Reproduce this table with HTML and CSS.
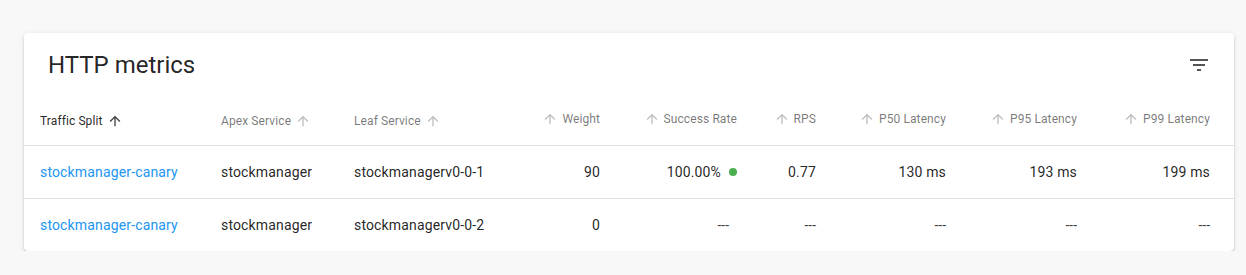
FILE: index.html
```html
<!DOCTYPE html>
<html>
<head>
<meta charset="utf-8">
<link rel="stylesheet" href="styles.css">
</head>
<body>
<div class="page">
  <div class="card">
    <div class="toolbar">
      <h2 class="title">HTTP metrics</h2>
      <span class="filter" aria-label="Filter list">
        <svg viewBox="0 0 24 24" width="24" height="24"><path d="M10 18h4v-2h-4v2zM3 6v2h18V6H3zm3 7h12v-2H6v2z"/></svg>
      </span>
    </div>
    <table class="metrics">
      <colgroup>
        <col class="c1"><col class="c2"><col class="c3"><col class="c4"><col class="c5"><col class="c6"><col class="c7"><col class="c8"><col class="c9">
      </colgroup>
      <thead>
        <tr>
          <th><span class="sort active">Traffic Split<svg class="arrow" viewBox="0 0 24 24"><path d="M4 12l1.41 1.41L11 7.83V20h2V7.83l5.58 5.59L20 12l-8-8-8 8z"/></svg></span></th>
          <th><span class="sort">Apex Service<svg class="arrow" viewBox="0 0 24 24"><path d="M4 12l1.41 1.41L11 7.83V20h2V7.83l5.58 5.59L20 12l-8-8-8 8z"/></svg></span></th>
          <th><span class="sort">Leaf Service<svg class="arrow" viewBox="0 0 24 24"><path d="M4 12l1.41 1.41L11 7.83V20h2V7.83l5.58 5.59L20 12l-8-8-8 8z"/></svg></span></th>
          <th class="num"><span class="sort rev">Weight<svg class="arrow" viewBox="0 0 24 24"><path d="M4 12l1.41 1.41L11 7.83V20h2V7.83l5.58 5.59L20 12l-8-8-8 8z"/></svg></span></th>
          <th class="num"><span class="sort rev">Success Rate<svg class="arrow" viewBox="0 0 24 24"><path d="M4 12l1.41 1.41L11 7.83V20h2V7.83l5.58 5.59L20 12l-8-8-8 8z"/></svg></span></th>
          <th class="num"><span class="sort rev">RPS<svg class="arrow" viewBox="0 0 24 24"><path d="M4 12l1.41 1.41L11 7.83V20h2V7.83l5.58 5.59L20 12l-8-8-8 8z"/></svg></span></th>
          <th class="num"><span class="sort rev">P50 Latency<svg class="arrow" viewBox="0 0 24 24"><path d="M4 12l1.41 1.41L11 7.83V20h2V7.83l5.58 5.59L20 12l-8-8-8 8z"/></svg></span></th>
          <th class="num"><span class="sort rev">P95 Latency<svg class="arrow" viewBox="0 0 24 24"><path d="M4 12l1.41 1.41L11 7.83V20h2V7.83l5.58 5.59L20 12l-8-8-8 8z"/></svg></span></th>
          <th class="num"><span class="sort rev">P99 Latency<svg class="arrow" viewBox="0 0 24 24"><path d="M4 12l1.41 1.41L11 7.83V20h2V7.83l5.58 5.59L20 12l-8-8-8 8z"/></svg></span></th>
        </tr>
      </thead>
      <tbody>
        <tr>
          <td><a class="link" href="#">stockmanager-canary</a></td>
          <td>stockmanager</td>
          <td>stockmanagerv0-0-1</td>
          <td class="num">90</td>
          <td class="num"><span class="rate">100.00%<span class="dot ok"></span></span></td>
          <td class="num">0.77</td>
          <td class="num">130 ms</td>
          <td class="num">193 ms</td>
          <td class="num">199 ms</td>
        </tr>
        <tr>
          <td><a class="link" href="#">stockmanager-canary</a></td>
          <td>stockmanager</td>
          <td>stockmanagerv0-0-2</td>
          <td class="num">0</td>
          <td class="num"><span class="rate"><span class="dash">---</span><span class="dot"></span></span></td>
          <td class="num"><span class="dash">---</span></td>
          <td class="num"><span class="dash">---</span></td>
          <td class="num"><span class="dash">---</span></td>
          <td class="num"><span class="dash">---</span></td>
        </tr>
      </tbody>
    </table>
  </div>
</div>
</body>
</html>
```

FILE: styles.css
```css
html, body {
  margin: 0;
  padding: 0;
  background: #f8f8f8;
  font-family: Roboto, "Liberation Sans", Arial, sans-serif;
  color: rgba(0, 0, 0, 0.87);
}

.page {
  padding: 33px 12px 0 24px;
}

.card {
  background: #fff;
  border-radius: 4px;
  box-shadow: 0 3px 1px -2px rgba(0, 0, 0, 0.2), 0 2px 2px 0 rgba(0, 0, 0, 0.14), 0 1px 5px 0 rgba(0, 0, 0, 0.12);
  overflow: hidden;
}

.toolbar {
  height: 64px;
  display: flex;
  align-items: center;
  justify-content: space-between;
  padding: 0 23px 0 24px;
}

.title {
  margin: 0;
  font-size: 24px;
  font-weight: 400;
  letter-spacing: 0;
  color: rgba(0, 0, 0, 0.87);
}

.filter {
  display: flex;
  width: 24px;
  height: 24px;
}

.filter svg {
  fill: #555;
}

.metrics {
  width: 100%;
  border-collapse: collapse;
  table-layout: fixed;
}

.c1 { width: 181px; }
.c2 { width: 133px; }
.c3 { width: 162px; }
.c4 { width: 116px; }
.c5 { width: 137px; }
.c6 { width: 79px; }
.c7 { width: 130px; }
.c8 { width: 131px; }
.c9 { width: 141px; }

.metrics th,
.metrics td {
  padding: 0 16px;
  text-align: left;
  border-bottom: 1px solid #e0e0e0;
  white-space: nowrap;
  box-sizing: border-box;
}

.metrics th:last-child,
.metrics td:last-child {
  padding-right: 24px;
}

.metrics th {
  height: 48px;
  font-size: 12px;
  font-weight: 400;
  letter-spacing: 0.1px;
  color: rgba(0, 0, 0, 0.54);
}

.metrics td {
  height: 53px;
  font-size: 14px;
  letter-spacing: 0.15px;
  color: rgba(0, 0, 0, 0.87);
}

.metrics tbody tr:last-child td {
  border-bottom: none;
  height: 53px;
}

.metrics .num {
  text-align: right;
}

.sort {
  display: inline-flex;
  align-items: center;
}

.sort.active {
  color: rgba(0, 0, 0, 0.87);
}

.sort.rev {
  flex-direction: row-reverse;
}

.arrow {
  width: 16px;
  height: 16px;
  margin: 0 4px;
  fill: rgba(0, 0, 0, 0.26);
}

.sort.active .arrow {
  fill: rgba(0, 0, 0, 0.75);
}

.link {
  color: #2196f3;
  text-decoration: none;
}

.rate {
  display: inline-flex;
  align-items: center;
}

.dash {
  letter-spacing: 0;
  color: rgba(0, 0, 0, 0.75);
}

.dot {
  display: inline-block;
  width: 0;
  height: 8px;
  margin-left: 8px;
  border-radius: 50%;
}

.dot.ok {
  width: 8px;
  background: #4caf50;
}
```
